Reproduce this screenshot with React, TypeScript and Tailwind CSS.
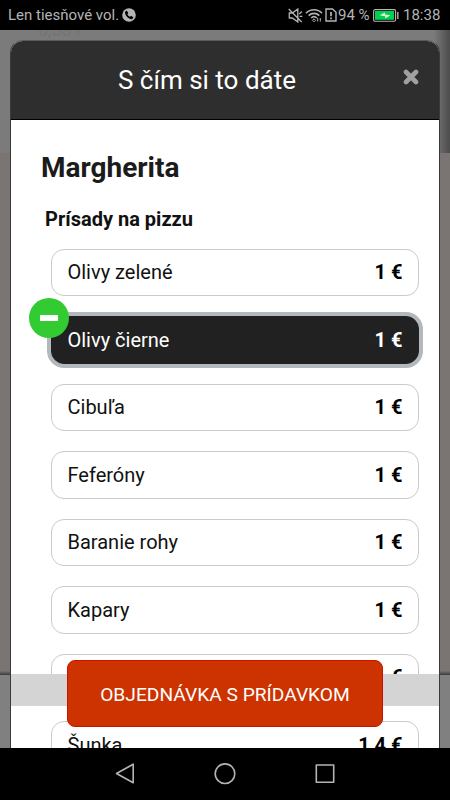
import React from 'react';

interface Topping {
  name: string;
  price: string;
  selected?: boolean;
}

const toppings: Topping[] = [
  { name: 'Olivy zelené', price: '1 €' },
  { name: 'Olivy čierne', price: '1 €', selected: true },
  { name: 'Cibuľa', price: '1 €' },
  { name: 'Feferóny', price: '1 €' },
  { name: 'Baranie rohy', price: '1 €' },
  { name: 'Kapary', price: '1 €' },
  { name: '', price: '1 €' },
  { name: 'Šunka', price: '1,4 €' },
];

const StatusBar: React.FC = () => (
  <div className="flex h-[30px] shrink-0 items-center bg-black pl-2 pr-[10px] text-[#b4b4b4]">
    <span className="text-[15px] leading-[30px]">Len tiesňové vol.</span>
    <svg className="ml-[3px]" width="14" height="14" viewBox="0 0 14 14">
      <circle cx="7" cy="7" r="6.8" fill="#b4b4b4" />
      <path
        d="M4.6 2.5 3 4c-.2 3.6 3.6 7.3 7 7.2l1.5-1.7-2.3-1.7-1.2 1C6.7 8.2 5.9 7.3 5.4 6.2l1-1.3z"
        fill="#000"
      />
    </svg>

    {/* Muted */}
    <svg className="ml-auto" width="15" height="15" viewBox="0 0 15 15" fill="none" stroke="#b4b4b4" strokeWidth="1.3">
      <path d="M1.3 5v5h3l5.5 4V1L4.3 5zM.7 1l13 13M13.8 3.5l-2.5 2.5M11.6 8.3h2.8" />
    </svg>
    {/* Wifi */}
    <svg className="ml-[2px]" width="18" height="14" viewBox="0 0 18 14" fill="none" stroke="#b4b4b4" strokeWidth="1.6">
      <path d="M1 5.2C5.5.6 12.5.6 17 5.2M3.7 7.6c3-3 7.6-3 10.6 0M6.2 10c1.7-1.6 3.9-1.6 5.6 0" />
      <path d="M9 10.8l1.5 1.5L9 13.8l-1.5-1.5zM12.7 10v3.5M15.3 10v3.5" strokeWidth="1" />
    </svg>
    {/* SIM warning */}
    <svg className="ml-[2px]" width="12" height="14" viewBox="0 0 12 14" fill="none" stroke="#b4b4b4" strokeWidth="1.4">
      <path d="M1 1h6.5L11 4.2V13H1z" />
      <path d="M6 4v4.2M6 9.5v1.8" strokeWidth="1.7" />
    </svg>
    <span className="ml-[1px] w-[33px] whitespace-nowrap text-[15px] leading-[28px]">94 %</span>
    {/* Battery */}
    <svg className="ml-[2px]" width="26" height="13" viewBox="0 0 26 13">
      <rect x=".6" y=".6" width="22" height="11.6" rx="1.5" fill="none" stroke="#b4b4b4" strokeWidth="1.1" />
      <rect x="2" y="2" width="19" height="8.8" fill="#00cf4f" />
      <path d="M6.5 6.3 12 3.5v1.9l5.5.8-5.3 3.2V7.2z" fill="#d9f5df" />
      <path d="M24.8 3v7" stroke="#b4b4b4" strokeWidth="1.4" />
    </svg>
    <span className="ml-[4px] w-[37px] whitespace-nowrap pt-px text-[15px]">18:38</span>
  </div>
);

const ToppingRow: React.FC<{ item: Topping }> = ({ item }) => (
  <div
    className={`relative flex h-[47.5px] shrink-0 items-center justify-between rounded-[13px] px-[15.5px] text-[20px] ${
      item.selected
        ? 'border border-[#212121] bg-[#212121] text-white ring-4 ring-[#b2b8be]'
        : 'border border-[#cacaca] bg-white text-[#111]'
    }`}
  >
    {item.selected && (
      <div className="absolute -left-[23px] -top-[19.5px] flex size-10 items-center justify-center rounded-full bg-[#32cb32]">
        <div className="h-[6px] w-[18px] bg-white" />
      </div>
    )}
    <span>{item.name}</span>
    <span className={item.selected ? 'font-bold' : 'font-bold text-black'}>{item.price}</span>
  </div>
);

const NavBar: React.FC = () => (
  <div className="flex h-[52px] shrink-0 items-center justify-center bg-black">
    <svg width="220" height="24" viewBox="0 0 220 24" fill="none" stroke="#b4b4b4" strokeWidth="1.6" strokeLinejoin="round">
      <path d="M18.2 2.2v18.6L1.5 11.5z" />
      <circle cx="110" cy="11.7" r="9.8" />
      <rect x="201.3" y="3" width="17.4" height="17.2" />
    </svg>
  </div>
);

export default function App() {
  return (
    <div className="flex h-[800px] w-[450px] flex-col overflow-hidden bg-black font-[Roboto,sans-serif]">
      <StatusBar />

      <main className="relative h-[718px] shrink-0 overflow-hidden">
        {/* Dimmed page behind the dialog */}
        <div className="absolute inset-0 flex flex-col bg-[#7a7573]">
          <div className="flex h-[123px] shrink-0 justify-end bg-[#7a7b7a]">
            <span className="mr-auto -mt-[9px] ml-[38px] h-[18px] text-[18px] leading-[18px] text-[#747574]">0,33 l</span>
            <div className="w-[16px] bg-linear-to-r from-[#7a7b7a] to-[#4c4c4c]" />
          </div>
          <div className="flex-1" />
          <div className="h-[4px] bg-linear-to-b from-[#7a7573] to-[#3c3a3a]" />
          <div className="h-[73px] bg-[#808080]" />
        </div>

        <section className="relative mx-[10px] mt-[10px] flex h-[708px] flex-col overflow-hidden rounded-t-[13px] border-x border-t border-x-[#3a3a3a] border-t-[#5a5a5a] bg-white">
          <header className="flex h-[79px] shrink-0 items-center border-b border-black bg-[#2e2e2e] text-white">
            <h1 className="w-full text-center text-[26px] leading-[30px]">S čím si to dáte</h1>
            <svg className="mb-[7px] mr-[20px] shrink-0" width="16" height="16" viewBox="0 0 16 16">
              <path d="M3 3l10 10M13 3L3 13" stroke="#a0a0a0" strokeWidth="4.6" strokeLinecap="round" />
            </svg>
          </header>

          <div className="px-[30px] pt-[30px]">
            <h2 className="text-[28px] font-bold leading-[36px] text-[#1b1b1b]">Margherita</h2>
            <h3 className="ml-[4px] mt-[21px] text-[20px] font-bold leading-[24px] text-[#111]">Prísady na pizzu</h3>
            <div className="-mr-[10px] ml-[10px] mt-[17.5px] flex flex-col gap-5">
              {toppings.map((item, i) => (
                <ToppingRow key={i} item={item} />
              ))}
            </div>
          </div>
        </section>

        {/* Sticky order bar */}
        <div className="absolute bottom-[42px] left-[11px] flex h-8 w-[428px] justify-center bg-[#d4d4d4]">
          <button className="-mt-[14px] h-[67px] w-[316px] shrink-0 rounded-[8px] border border-[#cc1100] bg-[#cc3300] pt-[4px] text-[19.2px] text-white">
            OBJEDNÁVKA S PRÍDAVKOM
          </button>
        </div>
      </main>

      <NavBar />
    </div>
  );
}
